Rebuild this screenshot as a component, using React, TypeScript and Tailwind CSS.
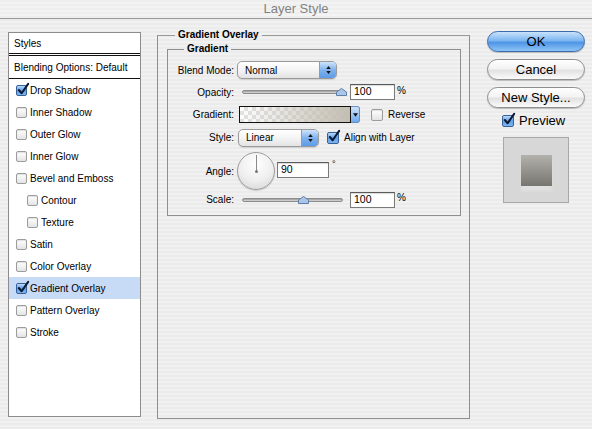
import React from 'react';

const pin =
  'bg-[repeating-linear-gradient(0deg,#ebebeb_0px,#ebebeb_2px,#f1f1f1_2px,#f1f1f1_4px)]';

const Check = ({ on = false, big = false }: { on?: boolean; big?: boolean }) => {
  const size = big ? 'w-[12px] h-[12px]' : 'w-[11px] h-[11px]';
  if (!on) {
    return (
      <div
        className={`${size} shrink-0 rounded-[2px] border border-[#9c9c9c] bg-[linear-gradient(180deg,#ffffff,#e4e4e4)] shadow-[inset_0_1px_1px_rgba(0,0,0,0.12)]`}
      />
    );
  }
  return (
    <div
      className={`${size} relative shrink-0 rounded-[2px] border border-[#35609a] bg-[linear-gradient(180deg,#bcd9f7,#5f9ee6_50%,#7fb6f0)]`}
    >
      <svg
        viewBox="0 0 14 14"
        className="absolute left-[0px] top-[-3px] w-[13px] h-[13px] overflow-visible"
      >
        <path d="M2 7.5 L5 11 L12 1" fill="none" stroke="#0b1a33" strokeWidth="2.2" strokeLinecap="round" strokeLinejoin="round" />
      </svg>
    </div>
  );
};

const Item = ({
  label,
  on = false,
  sub = false,
  active = false,
}: {
  label: string;
  on?: boolean;
  sub?: boolean;
  active?: boolean;
}) => (
  <div
    className={`h-[22px] flex items-center gap-[2px] ${sub ? 'pl-[18px]' : 'pl-[7px]'} ${
      active ? 'bg-[#c7dbf7]' : ''
    }`}
  >
    <Check on={on} />
    <span className="ml-[1px]">{label}</span>
  </div>
);

const Select = ({ value, w }: { value: string; w: string }) => (
  <div
    className={`${w} h-[18px] flex rounded-[5px] border border-[#9a9a9a] bg-[linear-gradient(180deg,#ffffff,#f4f4f4_50%,#e3e3e3)] shadow-[0_1px_1px_rgba(0,0,0,0.12)] overflow-hidden`}
  >
    <div className="flex-1 flex items-center pl-[7px]">{value}</div>
    <div className="w-[17px] flex flex-col items-center justify-center gap-[2px] border-l border-[#7b9fd0] bg-[linear-gradient(180deg,#cfe4fb,#7fb2ee_50%,#5d9be6)]">
      <svg viewBox="0 0 6 4" className="w-[5px] h-[3px]">
        <path d="M0 4 L3 0 L6 4 Z" fill="#111" />
      </svg>
      <svg viewBox="0 0 6 4" className="w-[5px] h-[3px]">
        <path d="M0 0 L3 4 L6 0 Z" fill="#111" />
      </svg>
    </div>
  </div>
);

const Slider = ({ pos }: { pos: number }) => (
  <div className="relative w-[101px] h-[10px] flex items-center">
    <div className="w-full h-[4px] rounded-full border border-[#8c8c8c] bg-[linear-gradient(180deg,#9a9a9a,#dcdcdc)]" />
    <svg
      viewBox="0 0 11 8"
      className="absolute top-[1px] w-[11px] h-[8px]"
      style={{ left: pos - 5 }}
    >
      <path d="M0.5 7.5 L0.5 4 L5.5 0.5 L10.5 4 L10.5 7.5 Z" fill="#a9c6e9" stroke="#5f7ea8" strokeWidth="1" />
    </svg>
  </div>
);

const Field = ({ value, w }: { value: string; w: string }) => (
  <div
    className={`${w} h-[16px] flex items-center pl-[3px] text-[10.5px] bg-white border border-[#7a7a7a] border-t-[#5a5a5a] shadow-[inset_0_1px_1px_rgba(0,0,0,0.15)]`}
  >
    {value}
  </div>
);

const Btn = ({ label, primary = false }: { label: string; primary?: boolean }) => (
  <div
    className={`w-[98px] h-[21px] flex items-center justify-center rounded-full text-[13px] border ${
      primary
        ? 'border-[#3d6aa8] bg-[linear-gradient(180deg,#c9e2fb,#7cb6f1_45%,#4f95e6_55%,#8cc4f6)]'
        : 'border-[#8f8f8f] bg-[linear-gradient(180deg,#ffffff,#f3f3f3_45%,#e2e2e2_55%,#fbfbfb)]'
    } shadow-[0_1px_1px_rgba(0,0,0,0.2)]`}
  >
    {label}
  </div>
);

const Label = ({ children }: { children: React.ReactNode }) => (
  <div className="w-[67px] text-right pr-[1px]">{children}</div>
);

export default function App() {
  return (
    <div
      className={`w-[592px] h-[429px] overflow-hidden ${pin} font-['Liberation_Sans',Arial,sans-serif] text-[10px] text-black`}
    >
      <div className="h-[19px] flex items-center justify-center border-b border-[#9b9b9b] text-[13px] text-[#828282] bg-[repeating-linear-gradient(0deg,#eeeeee_0px,#eeeeee_2px,#f3f3f3_2px,#f3f3f3_4px)]">
        Layer Style
      </div>

      <div className="flex items-start pt-[10px]">
        {/* styles list */}
        <div className="ml-[8px] mt-[3px] w-[133px] h-[385px] border border-[#8c8c8c] bg-white">
          <div className="h-[20px] flex items-center pl-[5px]">Styles</div>
          <div className="h-[3px] border-y border-[#111]" />
          <div className="h-[23px] flex items-center pl-[5px] border-b border-[#111]">
            Blending Options: Default
          </div>
          <Item label="Drop Shadow" on />
          <Item label="Inner Shadow" />
          <Item label="Outer Glow" />
          <Item label="Inner Glow" />
          <Item label="Bevel and Emboss" />
          <Item label="Contour" sub />
          <Item label="Texture" sub />
          <Item label="Satin" />
          <Item label="Color Overlay" />
          <Item label="Gradient Overlay" on active />
          <Item label="Pattern Overlay" />
          <Item label="Stroke" />
        </div>

        {/* settings */}
        <fieldset className="ml-[16px] w-[313px] h-[390px] border border-[#8e8e8e] border-t-[#9a9a9a]">
          <legend className="ml-[17px] px-[3px] font-bold leading-[12px]">Gradient Overlay</legend>
          <fieldset className="ml-[9px] mt-[2px] w-[294px] h-[173px] border border-[#8e8e8e]">
            <legend className="ml-[16px] px-[3px] font-bold leading-[12px]">Gradient</legend>

            <div className="mt-[6px] h-[18px] flex items-center">
              <Label>Blend Mode:</Label>
              <div className="ml-[2px]">
                <Select value="Normal" w="w-[100px]" />
              </div>
            </div>

            <div className="mt-[5px] h-[16px] flex items-center">
              <Label>Opacity:</Label>
              <div className="ml-[7px]">
                <Slider pos={99} />
              </div>
              <div className="ml-[7px]">
                <Field value="100" w="w-[45px]" />
              </div>
              <span className="ml-[2px] self-start -mt-[1px]">%</span>
            </div>

            <div className="mt-[6px] h-[17px] flex items-center">
              <Label>Gradient:</Label>
              <div className="ml-[4px] flex h-[17px]">
                <div className="w-[112px] h-[17px] border border-[#111] bg-[repeating-conic-gradient(#e2e2e2_0%_25%,#ffffff_0%_50%)] [background-size:8px_8px]">
                  <div className="w-full h-full bg-[linear-gradient(90deg,rgba(196,191,179,0),rgba(196,191,179,0.6)_55%,#c3beb2)]" />
                </div>
                <div className="w-[9px] h-[17px] flex items-center justify-center border border-l-0 border-[#6a8ec0] rounded-r-[3px] bg-[linear-gradient(180deg,#cfe4fb,#6ea7ec)]">
                  <svg viewBox="0 0 6 4" className="w-[5px] h-[4px]">
                    <path d="M0 0 L3 4 L6 0 Z" fill="#111" />
                  </svg>
                </div>
              </div>
              <div className="ml-[11px]">
                <Check big />
              </div>
              <span className="ml-[5px]">Reverse</span>
            </div>

            <div className="mt-[5px] h-[19px] flex items-center">
              <Label>Style:</Label>
              <div className="ml-[3px]">
                <Select value="Linear" w="w-[81px]" />
              </div>
              <div className="ml-[8px]">
                <Check on big />
              </div>
              <span className="ml-[5px]">Align with Layer</span>
            </div>

            <div className="mt-[5px] h-[38px] flex items-center">
              <Label>Angle:</Label>
              <div className="ml-[2px] w-[38px] h-[38px] relative rounded-full border border-[#9d9d9d] bg-[radial-gradient(circle_at_50%_30%,#ffffff,#eeeeee_55%,#d2d2d2)] shadow-[0_1px_1px_rgba(0,0,0,0.15)]">
                <div className="absolute left-[18px] top-[2px] w-[1px] h-[17px] bg-[#8a8a8a]" />
                <div className="absolute left-[17px] top-[17px] w-[3px] h-[3px] rounded-full bg-[#777]" />
              </div>
              <div className="ml-[2px] -mt-[3px]">
                <Field value="90" w="w-[52px]" />
              </div>
              <span className="ml-[3px] self-start mt-[6px] text-[9px]">°</span>
            </div>

            <div className="mt-[2px] h-[15px] flex items-center">
              <Label>Scale:</Label>
              <div className="ml-[7px]">
                <Slider pos={61} />
              </div>
              <div className="ml-[7px]">
                <Field value="100" w="w-[45px]" />
              </div>
              <span className="ml-[2px] self-start -mt-[2px]">%</span>
            </div>
          </fieldset>
        </fieldset>

        {/* buttons */}
        <div className="ml-[17px] mt-[2px] flex flex-col">
          <div className="flex flex-col gap-[7px]">
            <Btn label="OK" primary />
            <Btn label="Cancel" />
            <Btn label="New Style..." />
          </div>
          <div className="mt-[5px] ml-[15px] h-[15px] leading-[15px] flex items-center gap-[5px] text-[13px]">
            <Check on big />
            <span>Preview</span>
          </div>
          <div className="mt-[9px] ml-[16px] w-[66px] h-[66px] flex items-center justify-center border border-[#a9a9a9] bg-[#d7d7d7]">
            <div className="w-[31px] h-[31px] bg-[linear-gradient(180deg,#b3b1ab,#777570)] shadow-[0_5px_3px_rgba(255,255,255,0.25)]" />
          </div>
        </div>
      </div>
    </div>
  );
}
